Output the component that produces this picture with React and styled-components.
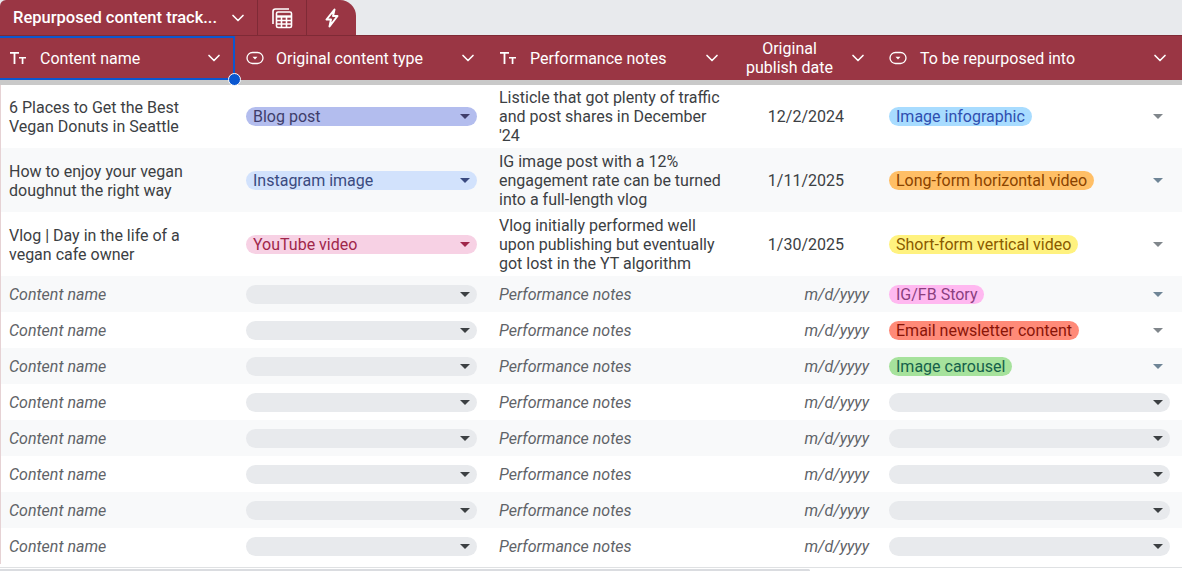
import React from "react";
import styled, { createGlobalStyle } from "styled-components";
import { ChevronDown } from "lucide-react";

const GlobalStyle = createGlobalStyle`
  html, body { margin: 0; padding: 0; height: 100%; overflow: hidden; }
  body { background: #fff; font-family: Roboto, "Liberation Sans", sans-serif; }
`;

const COLUMNS = "236px 254px 240px 150px 302px";

const Page = styled.div`
  width: 1182px;
  height: 571px;
  display: flex;
  flex-direction: column;
  overflow: hidden;
`;

const TabBar = styled.div`
  height: 35px;
  flex: none;
  background: #e8eaed;
  display: flex;
`;

const Tab = styled.div`
  width: 356px;
  height: 35px;
  background: #9a3644;
  border-top-right-radius: 16px;
  border-top-left-radius: 6px;
  display: flex;
  color: #fff;
`;

const TabTitle = styled.div`
  width: 258px;
  box-sizing: border-box;
  padding: 0 9px 0 13px;
  display: flex;
  align-items: center;
  justify-content: space-between;
  font-size: 16.5px;
  font-weight: 500;
  white-space: nowrap;
  border-right: 1px solid #7f2a36;
`;

const TabIcon = styled.div`
  width: 49px;
  box-sizing: border-box;
  display: flex;
  align-items: center;
  justify-content: center;
  border-right: ${(p) => (p.$divider ? "1px solid #7f2a36" : "none")};
`;

const HeaderRow = styled.div`
  height: 45px;
  flex: none;
  display: grid;
  grid-template-columns: ${COLUMNS};
  background: #9a3644;
  border-top: 1px solid #7f2a36;
  box-sizing: border-box;
  color: #fff;
`;

const HeaderCell = styled.div`
  position: relative;
  display: flex;
  align-items: center;
  box-sizing: border-box;
  padding: 0 ${(p) => p.$right}px 0 ${(p) => p.$left ?? 10}px;
  font-size: 16px;
`;

const SelectedHeaderCell = styled(HeaderCell)`
  border: 2px solid #0b57d0;
  border-left: none;
  margin-right: 1px;
`;

const HeaderLabel = styled.span`
  flex: 1;
  margin-left: ${(p) => p.$gap}px;
  line-height: 19px;
  white-space: nowrap;
`;

const CenteredLabel = styled.span`
  flex: 1;
  text-align: center;
  line-height: 19px;
`;

const SelectionHandle = styled.span`
  position: absolute;
  right: -8px;
  bottom: -8px;
  width: 11px;
  height: 11px;
  border-radius: 50%;
  background: #0b57d0;
  border: 1px solid #fff;
  z-index: 2;
`;

const FrozenBand = styled.div`
  height: 5px;
  flex: none;
  background: #c9c9c9;
`;

const Row = styled.div`
  height: ${(p) => p.$height}px;
  flex: none;
  display: grid;
  grid-template-columns: ${COLUMNS};
  align-items: center;
  background: ${(p) => (p.$shade ? "#f8f9fa" : "#fff")};
  border-left: 1px solid #e6d2d4;
  box-sizing: border-box;
  color: #3c4043;
  font-size: 16px;
  line-height: 19px;
`;

const TextCell = styled.div`
  padding-left: 8px;
  padding-right: 6px;
  font-style: ${(p) => (p.$ghost ? "italic" : "normal")};
  color: ${(p) => (p.$ghost ? "#5f6368" : "#3c4043")};
`;

const NameCell = styled(TextCell)`
  padding-top: ${(p) => (p.$first ? 0 : 2)}px;
  padding-right: 40px;
`;

const DateCell = styled.div`
  text-align: right;
  padding-right: ${(p) => (p.$ghost ? 12 : 37)}px;
  font-style: ${(p) => (p.$ghost ? "italic" : "normal")};
  color: ${(p) => (p.$ghost ? "#5f6368" : "#3c4043")};
`;

const SelectCell = styled.div`
  padding-left: ${(p) => p.$left}px;
  padding-right: ${(p) => p.$right}px;
`;

const SelectPill = styled.div`
  height: 19px;
  border-radius: 10px;
  background: ${(p) => p.$bg || "#e8eaed"};
  color: ${(p) => p.$fg || "#3c4043"};
  display: flex;
  align-items: center;
  justify-content: space-between;
  padding: 0 7px;
  white-space: nowrap;
`;

const LooseCell = styled.div`
  display: flex;
  align-items: center;
  justify-content: space-between;
  padding-left: 8px;
  padding-right: 20px;
`;

const Chip = styled.span`
  height: 19px;
  border-radius: 10px;
  background: ${(p) => p.$bg};
  color: ${(p) => p.$fg};
  padding: 0 7px;
  white-space: nowrap;
`;

const Caret = styled.span`
  width: 0;
  height: 0;
  border-left: 5px solid transparent;
  border-right: 5px solid transparent;
  border-top: 5px solid ${(p) => p.$color || "#3c4043"};
`;

const BottomBar = styled.div`
  flex: 1;
  border-top: 1px solid #dfe1e3;
  margin-top: 3px;
`;

const ScrollThumb = styled.div`
  width: 810px;
  height: 3px;
  margin-top: 1px;
  background: #dadce0;
  border-radius: 0 2px 2px 0;
`;

const CalcIcon = () => (
  <svg width="22" height="22" viewBox="0 0 22 22" fill="none" stroke="#fff" strokeWidth="1.6">
    <path d="M2 17V4.5A2.5 2.5 0 0 1 4.5 2H18" />
    <rect x="5.5" y="5" width="15" height="15.5" rx="1.5" />
    <path d="M5.5 9.5h15" strokeWidth="2.4" />
    <path d="M5.5 13.5h15M5.5 17h15M10.5 10v10M15.5 10v10" />
  </svg>
);

const BoltIcon = () => (
  <svg width="16" height="20" viewBox="0 0 16 20" fill="none" stroke="#fff" strokeWidth="2" strokeLinejoin="round">
    <path d="M10.5 1.5 2.5 11.5H7L5.5 18.5 13.5 8H9z" />
  </svg>
);

const TextTypeIcon = () => (
  <svg width="16" height="14" viewBox="0 0 16 14" fill="#fff">
    <path d="M0 1h9v1.8H5.4V13H3.6V2.8H0z" />
    <path d="M9 6h7v1.5h-2.6V13h-1.7V7.5H9z" />
  </svg>
);

const DropdownTypeIcon = () => (
  <svg width="18" height="14" viewBox="0 0 18 14" fill="none" stroke="#fff" strokeWidth="1.3">
    <rect x="1" y="1.5" width="16" height="11" rx="5.5" />
    <path d="M6.5 5.8h5L9 8.4z" fill="#fff" stroke="none" />
  </svg>
);

const Chevron = () => <ChevronDown size={20} strokeWidth={2} color="#fff" />;

const filled = [
  {
    name: "6 Places to Get the Best Vegan Donuts in Seattle",
    type: { label: "Blog post", bg: "#b3bdee", fg: "#3f3d6b" },
    notes: "Listicle that got plenty of traffic and post shares in December '24",
    date: "12/2/2024",
    into: { label: "Image infographic", bg: "#a8dcff", fg: "#2f4fb0", caret: "#80868b" },
  },
  {
    name: "How to enjoy your vegan doughnut the right way",
    type: { label: "Instagram image", bg: "#d2e2fc", fg: "#3a4a80" },
    notes: "IG image post with a 12% engagement rate can be turned into a full-length vlog",
    date: "1/11/2025",
    into: { label: "Long-form horizontal video", bg: "#ffbf66", fg: "#8a4300", caret: "#6f8596" },
  },
  {
    name: "Vlog | Day in the life of a vegan cafe owner",
    type: { label: "YouTube video", bg: "#f7d1e4", fg: "#a0264a" },
    notes: "Vlog initially performed well upon publishing but eventually got lost in the YT algorithm",
    date: "1/30/2025",
    into: { label: "Short-form vertical video", bg: "#fff27f", fg: "#8a5a00", caret: "#80868b" },
  },
];

const emptyInto = [
  { label: "IG/FB Story", bg: "#ffb8f0", fg: "#8b3f7f", caret: "#6f8596" },
  { label: "Email newsletter content", bg: "#ff8a78", fg: "#8a1508", caret: "#80868b" },
  { label: "Image carousel", bg: "#a6e29c", fg: "#15604a", caret: "#6f8596" },
  null,
  null,
  null,
  null,
  null,
];

const IntoCell = ({ chip }) =>
  chip ? (
    <LooseCell>
      <Chip $bg={chip.bg} $fg={chip.fg}>{chip.label}</Chip>
      <Caret $color={chip.caret} />
    </LooseCell>
  ) : (
    <SelectCell $left={8} $right={13}>
      <SelectPill>
        <span />
        <Caret />
      </SelectPill>
    </SelectCell>
  );

export default function App() {
  return (
    <Page>
      <GlobalStyle />
      <TabBar>
        <Tab>
          <TabTitle>
            <span>Repurposed content track...</span>
            <Chevron />
          </TabTitle>
          <TabIcon $divider>
            <CalcIcon />
          </TabIcon>
          <TabIcon>
            <BoltIcon />
          </TabIcon>
        </Tab>
      </TabBar>

      <HeaderRow>
        <SelectedHeaderCell $right={9}>
          <TextTypeIcon />
          <HeaderLabel $gap={14}>Content name</HeaderLabel>
          <Chevron />
          <SelectionHandle />
        </SelectedHeaderCell>
        <HeaderCell $right={12}>
          <DropdownTypeIcon />
          <HeaderLabel $gap={12}>Original content type</HeaderLabel>
          <Chevron />
        </HeaderCell>
        <HeaderCell $right={8}>
          <TextTypeIcon />
          <HeaderLabel $gap={14}>Performance notes</HeaderLabel>
          <Chevron />
        </HeaderCell>
        <HeaderCell $left={1} $right={12}>
          <CenteredLabel>Original<br />publish date</CenteredLabel>
          <Chevron />
        </HeaderCell>
        <HeaderCell $left={9} $right={12}>
          <DropdownTypeIcon />
          <HeaderLabel $gap={13}>To be repurposed into</HeaderLabel>
          <Chevron />
        </HeaderCell>
      </HeaderRow>
      <FrozenBand />

      {filled.map((row, i) => (
        <Row key={row.name} $height={i === 0 ? 63 : 64} $shade={i % 2 === 1}>
          <NameCell $first={i === 0}>{row.name}</NameCell>
          <SelectCell $left={9} $right={14}>
            <SelectPill $bg={row.type.bg} $fg={row.type.fg}>
              <span>{row.type.label}</span>
              <Caret $color={row.type.fg} />
            </SelectPill>
          </SelectCell>
          <TextCell>{row.notes}</TextCell>
          <DateCell>{row.date}</DateCell>
          <IntoCell chip={row.into} />
        </Row>
      ))}

      {emptyInto.map((chip, i) => (
        <Row key={i} $height={36} $shade={i % 2 === 0}>
          <TextCell $ghost>Content name</TextCell>
          <SelectCell $left={9} $right={14}>
            <SelectPill>
              <span />
              <Caret />
            </SelectPill>
          </SelectCell>
          <TextCell $ghost>Performance notes</TextCell>
          <DateCell $ghost>m/d/yyyy</DateCell>
          <IntoCell chip={chip} />
        </Row>
      ))}

      <BottomBar>
        <ScrollThumb />
      </BottomBar>
    </Page>
  );
}
